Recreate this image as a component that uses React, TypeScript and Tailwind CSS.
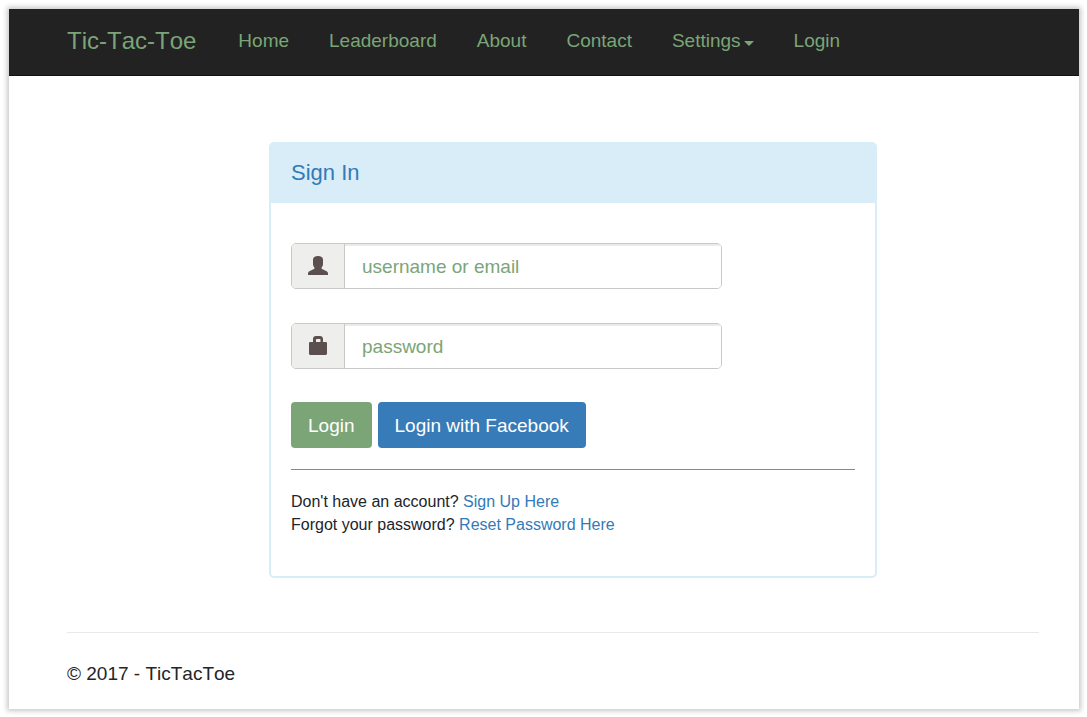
import type { ReactNode } from 'react';

const navLinks = ['Home', 'Leaderboard', 'About', 'Contact'];

function UserIcon() {
  return (
    <svg width="20" height="19" viewBox="0 0 20 19" fill="#5b4f4f" aria-hidden="true">
      <path d="M10 0C7 0 5 1.2 5 3.8V8C5 9.6 5.6 10.6 6.4 11.4V12.8L1.4 15.2C.4 15.7 0 16.5 0 17.6V19H20V17.6C20 16.5 19.6 15.7 18.6 15.2L13.6 12.8V11.4C14.4 10.6 15 9.6 15 8V3.8C15 1.2 13 0 10 0Z" />
    </svg>
  );
}

function LockIcon() {
  return (
    <svg width="18" height="19" viewBox="0 0 18 19" fill="#5b4f4f" aria-hidden="true">
      <path
        fillRule="evenodd"
        d="M4 6V3C4 1.2 5.2 0 7 0H11C12.8 0 14 1.2 14 3V6H16.6C17.5 6 18 6.5 18 7.4V17.6C18 18.5 17.5 19 16.6 19H1.4C.5 19 0 18.5 0 17.6V7.4C0 6.5.5 6 1.4 6ZM7 6H11.5V4C11.5 3.3 11.2 3 10.5 3H8C7.3 3 7 3.3 7 4Z"
      />
    </svg>
  );
}

function Field({ id, type, label, icon }: { id: string; type: string; label: string; icon: ReactNode }) {
  return (
    <div className="flex h-[46px] max-w-[431px] overflow-hidden rounded-[5px] border border-[#c8c8c8]">
      <label
        htmlFor={id}
        aria-label={label}
        className="flex w-[53px] shrink-0 items-center justify-center border-r border-[#c8c8c8] bg-[#eeeeec] pb-px"
      >
        {icon}
      </label>
      <input
        id={id}
        type={type}
        placeholder={label}
        className="min-w-0 flex-1 bg-white px-[17px] pt-px text-[19px] text-[#333] shadow-[inset_0_2px_0_#ebebeb] outline-none placeholder:text-[#7ba577] placeholder:opacity-100"
      />
    </div>
  );
}

export default function App() {
  return (
    <div className="bg-white px-2 py-2 pl-[9px] pt-[9px] font-['Liberation_Sans',Arial,sans-serif] text-[19px] leading-7 text-[#212529] [font-kerning:none]">
      <div className="bg-white shadow-[0_0_5px_2px_rgba(0,0,0,0.22)]">
        <header className="border-b border-[#1a1014] bg-[#222] pl-[58px] pr-10 text-[#7ba577]">
          <nav className="flex h-[66px] items-center gap-[42px] pb-[2px]">
            <a href="#" className="text-2xl">
              Tic-Tac-Toe
            </a>
            <div className="flex items-center gap-10">
              {navLinks.map((name) => (
                <a key={name} href="#">
                  {name}
                </a>
              ))}
              <button type="button" className="flex items-center gap-[3px]">
                Settings
                <svg width="10" height="5" viewBox="0 0 10 5" fill="currentColor" className="mt-1" aria-hidden="true">
                  <path d="M0 0H10L5 5Z" />
                </svg>
              </button>
              <a href="#">Login</a>
            </div>
          </nav>
        </header>

        <div className="pl-[58px] pr-10">
          <main className="pt-[66px] pl-[202px]">
            <section className="max-w-[608px] rounded-[5px] border-2 border-[#d8edf8]">
              <h1 className="bg-[#d8edf8] px-5 pt-[15px] pb-4 text-[22px] text-[#337ab7]">Sign In</h1>
              <form className="px-5 pt-10 pb-10" onSubmit={(e) => e.preventDefault()}>
                <div className="flex flex-col gap-[34px]">
                  <Field id="username" type="text" label="username or email" icon={<UserIcon />} />
                  <Field id="password" type="password" label="password" icon={<LockIcon />} />
                </div>
                <div className="mt-[33px] flex gap-[6px] text-white">
                  <button type="submit" className="h-[46px] rounded-[4px] bg-[#7ba577] px-[17px] pt-px">
                    Login
                  </button>
                  <button type="button" className="h-[46px] rounded-[4px] bg-[#377bb8] px-[17px] pt-px">
                    Login with Facebook
                  </button>
                </div>
                <hr className="mt-[21px] border-[#888]" />
                <div className="mt-5 text-base leading-[23px]">
                  <p>
                    Don't have an account?{' '}
                    <a href="#" className="text-[#337ab7]">
                      Sign Up Here
                    </a>
                  </p>
                  <p>
                    Forgot your password?{' '}
                    <a href="#" className="text-[#337ab7]">
                      Reset Password Here
                    </a>
                  </p>
                </div>
              </form>
            </section>
          </main>
          <footer className="mt-[54px] border-t border-[#e8e8e8] pt-[27px] pb-[21px]">
            <p>© 2017 - TicTacToe</p>
          </footer>
        </div>
      </div>
    </div>
  );
}
